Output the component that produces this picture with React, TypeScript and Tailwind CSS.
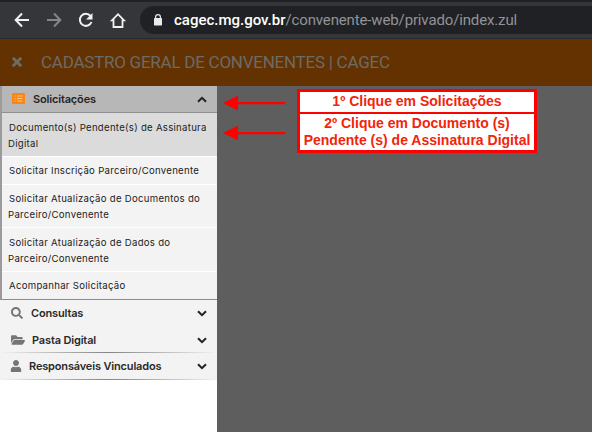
import type { ReactNode } from "react";
import { FaSearch, FaFolderOpen, FaUser } from "react-icons/fa";

function Chevron({ up = false }: { up?: boolean }) {
  return (
    <svg className="h-[7px] w-[10px] shrink-0" viewBox="0 0 10 7" fill="none" stroke="#222" strokeWidth="2">
      <path d={up ? "M1 5.8 5 1.8l4 4" : "M1 1.2l4 4 4-4"} />
    </svg>
  );
}

function Item({ lines, className }: { lines: string[]; className: string }) {
  return (
    <a className={"flex flex-col border-b border-white pl-[6px] text-[9.6px] leading-4 tracking-[0.28px] text-[#222] " + className}>
      {lines.map((text, i) => (
        <span key={text} className={i === 0 ? "pl-px whitespace-nowrap" : "whitespace-nowrap"}>{text}</span>
      ))}
    </a>
  );
}

function Group({ icon, label, className }: { icon: ReactNode; label: string; className: string }) {
  return (
    <div className={"flex items-center pr-[10px] text-[11px] font-semibold tracking-[-0.16px] text-[#2a2a2a] " + className}>
      {icon}
      <span className="flex-1 whitespace-nowrap">{label}</span>
      <Chevron />
    </div>
  );
}

function Divider() {
  return <div className="h-px bg-linear-to-r from-[#f3f3f3] via-[#858585] to-[#f3f3f3]" />;
}

function Arrow() {
  return (
    <svg className="block h-[16px] w-[62px]" viewBox="0 0 62 16">
      <path d="M0 8 15 .5v6.4h47v2.3H15v6.3Z" fill="#f00" />
    </svg>
  );
}

export default function App() {
  return (
    <div className="h-[432px] w-[592px] overflow-hidden bg-[#5e5e5e] font-['Inter',sans-serif]">
      <div className="flex h-[39px] items-center border-t-2 border-b border-t-[#202124] border-b-[#292a2d] bg-[#35363a]">
        <svg className="h-[36px] w-[140px] shrink-0" viewBox="0 2 140 36" fill="none" stroke="#f1f1f1" strokeWidth="2">
          <path d="M29 20H16M22 13.500 15.700 20l6.300 6.500" />
          <path d="M47 20h13M54 13.500l6.300 6.500-6.300 6.500" stroke="#85868a" />
          <path d="M90.500 16a6 6 0 1 0 1 6" />
          <path d="M92.500 13v6.500H86Z" fill="#f1f1f1" stroke="none" />
          <path d="M112 20.300h1.500V27h9v-6.700h1.500L118 14.200Z" strokeWidth="1.800" />
        </svg>
        <div className="flex h-[28px] flex-1 items-center rounded-l-[14px] bg-[#202124] pl-[14px]">
          <svg className="mr-[12px] h-[12px] w-[8px] shrink-0" viewBox="0 0 8 12" fill="#e8eaed">
            <path fillRule="evenodd" d="M1 4V3a3 3 0 0 1 6 0v1h.3a.7.7 0 0 1 .7.7v6.100a.7.7 0 0 1-.7.7H.7a.7.7 0 0 1-.7-.7V4.700A.7.7 0 0 1 .7 4ZM2.200 4h3.600V3a1.800 1.800 0 0 0-3.600 0Z" />
          </svg>
          <span className="font-['Roboto',sans-serif] text-[15px] leading-5 tracking-[-0.14px] whitespace-nowrap text-[#929397]">
            <span className="font-medium tracking-[0px] text-white">cagec.mg.gov.br</span>/convenente-web/privado/index.zul
          </span>
        </div>
      </div>

      <header className="flex h-[47px] items-center bg-[#643200] pl-[12px] text-[#6b6b68]">
        <svg className="mr-[19px] mb-px h-[10px] w-[10px]" viewBox="0 0 10 10" stroke="currentColor" strokeWidth="3">
          <path d="m.8.8 8.400 8.400M9.200.8.8 9.200" />
        </svg>
        <h1 className="mb-px font-['Roboto',sans-serif] text-[17px] leading-5 tracking-[-0.25px] whitespace-nowrap">CADASTRO GERAL DE CONVENENTES | CAGEC</h1>
      </header>

      <div className="flex h-[346px]">
        <aside className="w-[217px] shrink-0 bg-white">
          <div className="border-b border-l-2 border-b-[#8c8c8c] border-l-[#9b9b9b] bg-[#f3f3f3]">
            <div className="flex h-[27px] items-center border-b border-[#8f8f8f] bg-[#b7b7b7] pr-[10px] pl-[10px]">
              <svg className="mr-[8px] mb-px h-[11px] w-[13px]" viewBox="0 0 13 11">
                <rect width="13" height="11" rx="1.300" fill="#fb8510" />
                <path d="M2.500 3h1M5 3h5.500M2.500 5.500h1M5 5.500h5.500M2.500 8h1M5 8h5.500" stroke="#ffd39c" strokeWidth=".8" />
              </svg>
              <span className="flex-1 text-[11px] font-semibold tracking-[-0.16px] text-[#252525]">Solicitações</span>
              <Chevron up />
            </div>
            <Item className="h-[44px] bg-[#dbdbdb] pt-[7px]" lines={["Documento(s) Pendente(s) de Assinatura", "Digital"]} />
            <Item className="h-[28px] pt-[6px]" lines={["Solicitar Inscrição Parceiro/Convenente"]} />
            <Item className="h-[43px] pt-[6px]" lines={["Solicitar Atualização de Documentos do", "Parceiro/Convenente"]} />
            <Item className="h-[44px] pt-[7px]" lines={["Solicitar Atualização de Dados do", "Parceiro/Convenente"]} />
            <Item className="h-[27px] border-b-0 pt-[6px]" lines={["Acompanhar Solicitação"]} />
          </div>
          <div className="bg-[#f3f3f3]">
            <Group className="h-[26px] pl-[11px]" label="Consultas" icon={<FaSearch className="mr-[8px] mb-px size-[12px] text-[#757575]" />} />
            <Group className="h-[26px] pt-[2px] pl-[11px]" label="Pasta Digital" icon={<FaFolderOpen className="mr-[7px] mb-px size-[14px] text-[#757575]" />} />
            <Divider />
            <Group className="h-[26px] pl-[10px]" label="Responsáveis Vinculados" icon={<FaUser className="mr-[7px] mb-px size-[12px] text-[#757575]" />} />
            <Divider />
          </div>
        </aside>

        <main className="flex flex-1 items-start pt-[3px] pl-[6px]">
          <div className="flex flex-col gap-[14px] pt-[6px]">
            <Arrow />
            <Arrow />
          </div>
          <div className="ml-[12px] w-[240px] border-[3px] border-[#f00] bg-white text-center font-['Liberation_Sans',Arial,sans-serif] text-[14px] font-bold whitespace-nowrap text-[#f22409]">
            <p className="h-[22px] border-b-2 border-[#f00] leading-[19px]">1º Clique em Solicitações</p>
            <p className="h-[36px] pt-px leading-[17px]">2º Clique em Documento (s)<br />Pendente (s) de Assinatura Digital</p>
          </div>
        </main>
      </div>
    </div>
  );
}
